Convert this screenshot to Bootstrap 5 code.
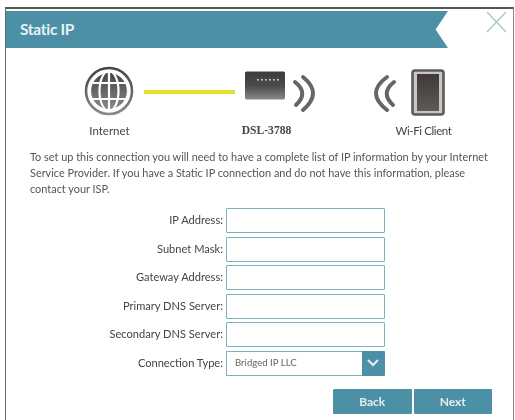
<!DOCTYPE html>
<html lang="en">
<head>
<meta charset="utf-8">
<title>Static IP</title>
<link rel="stylesheet" href="https://cdn.jsdelivr.net/npm/bootstrap@5.3.0/dist/css/bootstrap.min.css">
<style>
html,body{background:#fff;overflow:hidden;margin:0}
body{font-family:Lato,"Open Sans",sans-serif;color:#444;width:515px;height:420px}
.wiz-frame{margin:7px 1px 0 5px;height:413px;border-top:2px solid #555;border-left:1px solid #666;border-right:1px solid #888;filter:blur(.6px);box-sizing:border-box}
.wiz-head{margin-top:2px;height:37px;width:442px;background:#4b90a6;color:#e8f1f4;font-size:15.5px;font-weight:700;padding-left:14px;letter-spacing:-.3px;clip-path:polygon(0 0,100% 0,97.2% 50%,100% 100%,0 100%)}
.wiz-close{right:5px;top:1px;width:26px;height:26px}
.wiz-diagram{display:block;margin:0}
.wiz-names{width:471px;margin-left:25px;margin-top:7px;font-size:11.5px;line-height:14px;color:#444}
.wiz-names>div{width:157px;text-align:center}
.wiz-names>.wiz-serif{font-family:"Liberation Serif",serif;font-weight:700;font-size:11.6px}
.wiz-names>.wiz-tight{letter-spacing:-.4px}
.wiz-copy{margin:11px 20px 0 24px;font-size:10.92px;line-height:16px;color:#555}
.wiz-form{margin-top:11px;gap:3.5px}
.wiz-label{width:220px;padding-right:3px;text-align:right;font-size:11.1px;color:#444;margin:0}
.wiz-field{width:158.5px;height:25px;border:1px solid #7fb0bf;border-radius:1px;padding:0 8px;font-size:10px;color:#555;background:#fff}
.wiz-pick{width:158.5px;height:25px;flex-wrap:nowrap}
.wiz-pick .form-select{height:25px;min-height:0;border:1px solid #7fb0bf;border-right:0;border-radius:1px 0 0 1px;padding:0 0 0 8px;font-size:9.6px;color:#666;background-image:none}
.wiz-arrow{width:24px;height:25px;background:#4b90a6;border:0;border-radius:0 1px 1px 0;padding:0 5px}
.wiz-actions{margin:10px 21px 0 0;gap:2px}
.wiz-btn{width:78.5px;height:25px;padding:0;background:#4b90a6;border:0;border-radius:1px;color:#e4eef1;font-size:12px;font-weight:700}
</style>
</head>
<body>
<div class="wiz-frame position-relative">
  <div class="wiz-head d-flex align-items-center">Static IP</div>
  <svg class="wiz-close position-absolute" viewBox="0 0 26 26" aria-label="Close"><path d="M5 2 24 22M24 2 5 22" stroke="#a9c6bf" stroke-width="1.3" fill="none"/></svg>

  <svg class="wiz-diagram" width="503" height="69" viewBox="0 0 503 69">
    <defs>
      <linearGradient id="g1" x1="0" y1="0" x2="0" y2="1"><stop offset="0" stop-color="#444"/><stop offset="1" stop-color="#8a8a8a"/></linearGradient>
      <linearGradient id="g2" x1="0" y1="0" x2="0" y2="1"><stop offset="0" stop-color="#3c3c3c"/><stop offset=".5" stop-color="#4a4a4a"/><stop offset="1" stop-color="#888"/></linearGradient>
      <linearGradient id="g3" x1="0" y1="0" x2="0" y2="1"><stop offset="0" stop-color="#3f3a39"/><stop offset="1" stop-color="#5e5a58"/></linearGradient>
    </defs>
    <circle cx="103" cy="43" r="23" fill="#fff" stroke="url(#g1)" stroke-width="2.6"/>
    <circle cx="103" cy="43" r="18.5" fill="url(#g1)"/>
    <g fill="none" stroke="#fff" stroke-width="2.2">
      <path d="M103 23V63M83 35H123M83 51H123"/>
      <ellipse cx="103" cy="43" rx="9.5" ry="20"/>
      <circle cx="103" cy="43" r="19"/>
    </g>
    <rect x="138" y="42" width="91" height="4" fill="#e6e02c"/>
    <rect x="239" y="23.500" width="40" height="28" rx="1.500" fill="url(#g2)"/>
    <g fill="#ddd"><rect x="251" y="31" width="1.600" height="1.600"/><rect x="255" y="31" width="1.600" height="1.600"/><rect x="259" y="31" width="1.600" height="1.600"/><rect x="263" y="31" width="1.600" height="1.600"/><rect x="267" y="31" width="1.600" height="1.600"/><rect x="271" y="31" width="1.600" height="1.600"/></g>
    <g fill="none" stroke="#666" stroke-linecap="round">
      <path d="M289 34Q303 45 290 57" stroke-width="4"/>
      <path d="M297 29Q317 45 297 62" stroke-width="4"/>
      <path d="M388 34Q374 45 387 57" stroke-width="4"/>
      <path d="M381 29Q359 45 381 62" stroke-width="4"/>
    </g>
    <rect x="406.500" y="22.500" width="31" height="44" rx="2.500" fill="#c9c7c5" stroke="#5c5a58" stroke-width="2.600"/>
    <rect x="411" y="26" width="22" height="37" fill="url(#g3)"/>
  </svg>
  <div class="wiz-names d-flex">
    <div>Internet</div>
    <div class="wiz-serif">DSL-3788</div>
    <div class="wiz-tight">Wi-Fi Client</div>
  </div>

  <p class="wiz-copy">To set up this connection you will need to have a complete list of IP information by your Internet Service Provider. If you have a Static IP connection and do not have this information, please contact your ISP.</p>

  <form class="wiz-form d-flex flex-column">
    <div class="d-flex align-items-center"><label class="wiz-label" for="f1">IP Address:</label><input id="f1" class="wiz-field form-control" type="text"></div>
    <div class="d-flex align-items-center"><label class="wiz-label" for="f2">Subnet Mask:</label><input id="f2" class="wiz-field form-control" type="text"></div>
    <div class="d-flex align-items-center"><label class="wiz-label" for="f3">Gateway Address:</label><input id="f3" class="wiz-field form-control" type="text"></div>
    <div class="d-flex align-items-center"><label class="wiz-label" for="f4">Primary DNS Server:</label><input id="f4" class="wiz-field form-control" type="text"></div>
    <div class="d-flex align-items-center"><label class="wiz-label" for="f5">Secondary DNS Server:</label><input id="f5" class="wiz-field form-control" type="text"></div>
    <div class="d-flex align-items-center"><label class="wiz-label" for="f6">Connection Type:</label>
      <div class="wiz-pick input-group">
        <select id="f6" class="form-select"><option>Bridged IP LLC</option></select>
        <span class="wiz-arrow input-group-text"><svg viewBox="0 0 14 10" width="14" height="10"><path d="M2 2 7 7 12 2" fill="none" stroke="#e8f1f4" stroke-width="2"/></svg></span>
      </div>
    </div>
    <div class="wiz-actions d-flex justify-content-end">
      <button type="button" class="wiz-btn btn">Back</button>
      <button type="button" class="wiz-btn btn">Next</button>
    </div>
  </form>
</div>
<script src="https://cdn.jsdelivr.net/npm/bootstrap@5.3.0/dist/js/bootstrap.bundle.min.js"></script>
</body>
</html>
